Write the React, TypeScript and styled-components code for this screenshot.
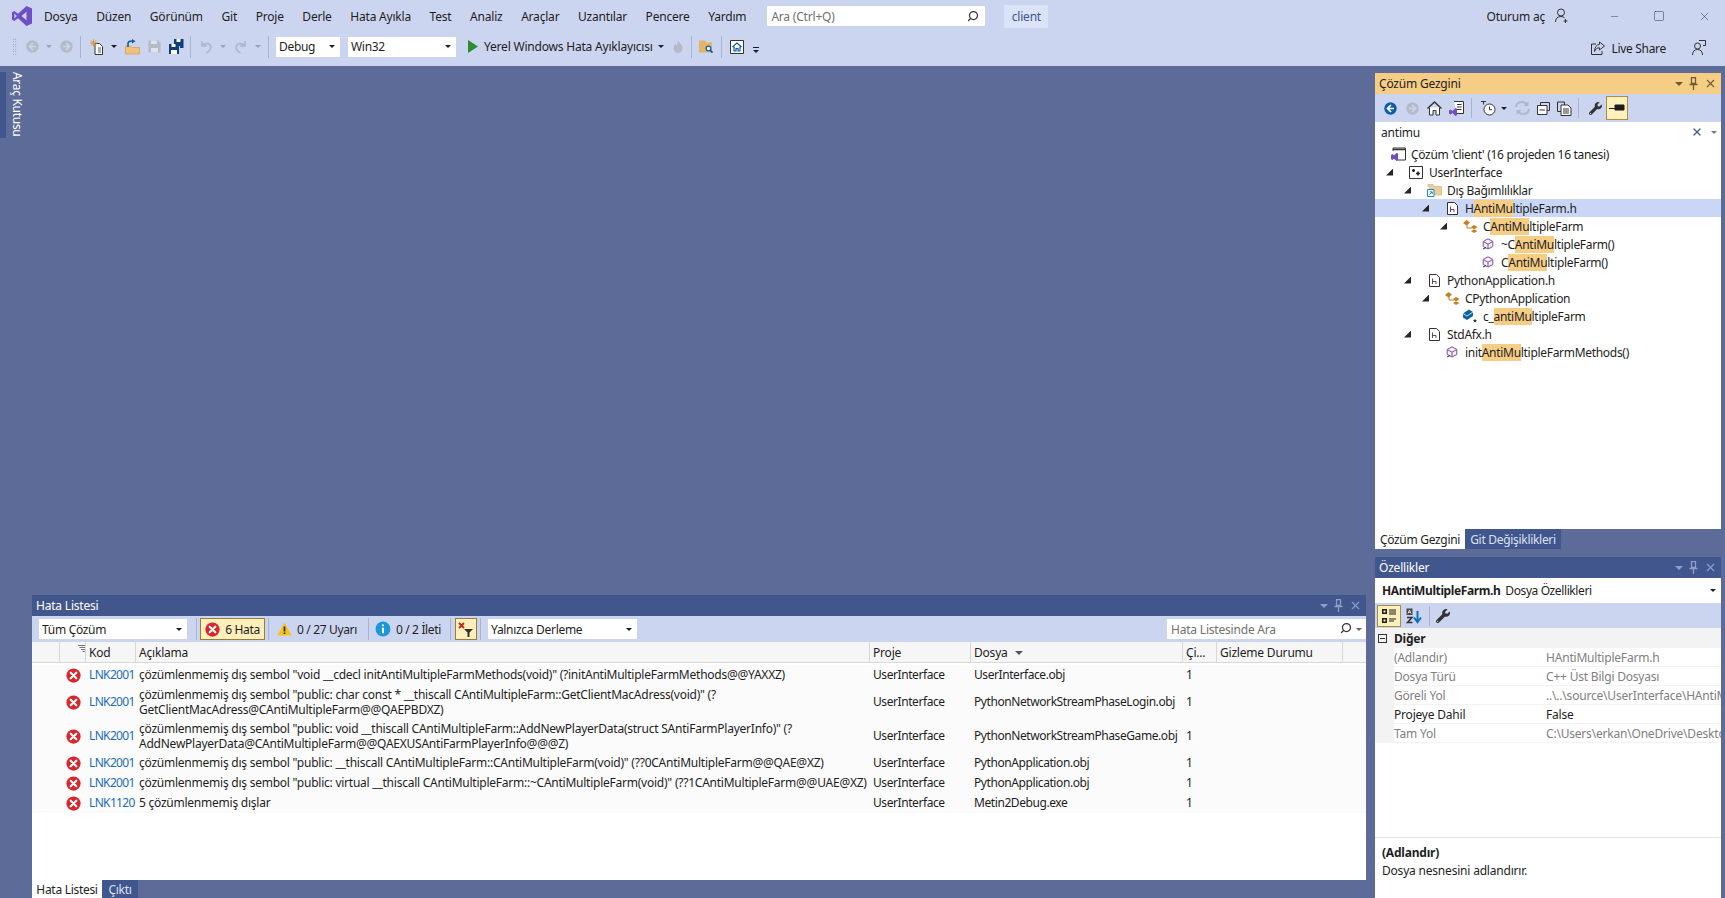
import React from 'react';
import styled, { createGlobalStyle } from 'styled-components';
import { FaWrench } from 'react-icons/fa';
import { Minus, Search, Square, X } from 'lucide-react';

const GlobalStyle = createGlobalStyle`
  html, body, #root {
    margin: 0;
    height: 100%;
  }
  body {
    overflow: hidden;
    background: #5d6b99;
    font-family: 'Noto Sans', 'Liberation Sans', sans-serif;
    font-size: 12px;
    letter-spacing: -0.2px;
    color: #1e1e1e;
  }
`;

const VsLogo = () => (
  <svg width="20" height="20" viewBox="0 0 20 20">
    <path
      fill="#6f4fc4"
      fillRule="evenodd"
      d="M14.5 0 20 2.5v15L14.5 20 6 12.2 2.4 15 0 13.8V6.2L2.4 5 6 7.8 14.5 0ZM14.5 5.8 9.6 10l4.9 4.2V5.8ZM2.4 7.6v4.8L4.8 10 2.4 7.6Z"
    />
  </svg>
);

const ErrorIcon = ({ size = 15 }: { size?: number }) => (
  <svg width={size} height={size} viewBox="0 0 16 16">
    <circle cx="8" cy="8" r="7.6" fill="#d8262c" />
    <path d="M5 5l6 6M11 5l-6 6" stroke="#fff" strokeWidth="2.3" strokeLinecap="round" />
  </svg>
);

const WarningIcon = () => (
  <svg width="15" height="14" viewBox="0 0 15 14">
    <path d="M7.5 0.5 14.8 13.5H0.2Z" fill="#f6c21c" />
    <path d="M7.5 4.5v5M7.5 10.5v1.6" stroke="#2a2a2a" strokeWidth="1.7" />
  </svg>
);

const InfoIcon = () => (
  <svg width="16" height="16" viewBox="0 0 16 16">
    <circle cx="8" cy="8" r="7.5" fill="#1c97d8" />
    <path d="M8 6.8v5.4M8 3.4v1.8" stroke="#fff" strokeWidth="2" />
  </svg>
);

const NavCircle = ({ color = '#b4bac8', inner = '#ccd5f0', flip = false }) => (
  <svg width="13" height="13" viewBox="0 0 13 13" style={flip ? { transform: 'scaleX(-1)' } : undefined}>
    <circle cx="6.5" cy="6.5" r="6.2" fill={color} />
    <path d="M7 3 3.5 6.5 7 10M4 6.5h6" stroke={inner} strokeWidth="1.7" fill="none" />
  </svg>
);

const NewFileIcon = () => (
  <svg width="14" height="16" viewBox="0 0 14 16">
    <path d="M5 4.5h4.5l3 3v8H5z" fill="#fff" stroke="#333" strokeWidth="1" />
    <path d="M8 9h3M8 11h3M8 13h3" stroke="#333" strokeWidth="0.8" />
    <path d="M3.5 0.5v7M0 4h7M1 1.5l5 5M6 1.5l-5 5" stroke="#d9982b" strokeWidth="1" />
  </svg>
);

const OpenIcon = () => (
  <svg width="15" height="16" viewBox="0 0 15 16">
    <path d="M0.5 7h5l1.5 1.5h7.5V15H0.5z" fill="#eec27a" stroke="#d29c4c" strokeWidth="0.7" />
    <path d="M3 8V4.5c0-1.7 2-2.5 4-2.5h1" fill="none" stroke="#0e5da8" strokeWidth="1.6" />
    <path d="M7 0l3.5 2.2L7 4.4z" fill="#0e5da8" />
  </svg>
);

const SaveIcon = () => (
  <svg width="13" height="13" viewBox="0 0 13 13">
    <path d="M0.5 0.5h10l2 2v10H0.5z" fill="#b4bac8" />
    <path d="M3 0.5h6v3.5H3zM3 8h7v4.5H3z" fill="#dfe3ee" />
  </svg>
);

const SaveAllIcon = () => (
  <svg width="15" height="15" viewBox="0 0 15 15">
    <path d="M5 0h9.5v9H11v-2H5z" fill="#0d3f7a" />
    <path d="M7.5 0h4v3h-4z" fill="#fff" />
    <path d="M0 5h10v10H0z" fill="#0d3f7a" />
    <path d="M2.5 5h4v3h-4zM2 11h6v4H2z" fill="#fff" />
  </svg>
);

const UndoIcon = ({ flip = false }) => (
  <svg width="12" height="14" viewBox="0 0 12 14" style={flip ? { transform: 'scaleX(-1)' } : undefined}>
    <path d="M2 1v5h5M2.5 5.5C5 2.5 10.5 3 10.8 7c.2 2.8-1.8 4.5-4.3 6" fill="none" stroke="#b0b7c8" strokeWidth="1.7" />
  </svg>
);

const PlayIcon = () => (
  <svg width="10" height="13" viewBox="0 0 10 13">
    <path d="M0 0 10 6.5 0 13z" fill="#2f8a33" />
  </svg>
);

const FlameIcon = () => (
  <svg width="10" height="13" viewBox="0 0 10 13">
    <path d="M5 0c1 3 4.5 4 4.5 8S7 13 5 13 .5 11.5.5 8c0-2 1.5-3 2-4.5L4 6z" fill="#b4bac8" />
  </svg>
);

const FolderSearchIcon = () => (
  <svg width="15" height="15" viewBox="0 0 15 15">
    <path d="M0 1.5h6l1.5 2H13v10H0z" fill="#e3b36a" />
    <circle cx="9.5" cy="9.5" r="2.3" fill="#fff" stroke="#0e5da8" strokeWidth="1.3" />
    <path d="M11 11.2l2.5 2.5" stroke="#0e5da8" strokeWidth="1.7" />
  </svg>
);

const HomeBoxIcon = () => (
  <svg width="14" height="14" viewBox="0 0 14 14">
    <path d="M0.5 0.5h13v13h-13z" fill="#fff" stroke="#333" />
    <path d="M2.5 7 7 3l4.500 4M4 6.5V11h2V8.5h2V11h2V6.500" fill="none" stroke="#0e5da8" strokeWidth="1.2" />
  </svg>
);

const PersonPlusIcon = () => (
  <svg width="14" height="16" viewBox="0 0 14 16">
    <circle cx="6" cy="4.5" r="3.5" fill="none" stroke="#333" />
    <path d="M0.5 14c0-3.500 2-5.500 5.500-5.500 1.500 0 2.500.4 3.500 1.200M10.500 11v4M8.500 13h4" fill="none" stroke="#333" />
  </svg>
);

const LiveShareIcon = () => (
  <svg width="14" height="14" viewBox="0 0 14 14">
    <path d="M5 3H0.5v10.500h10.500V10" fill="none" stroke="#333" />
    <path d="M8.5 1 13.500 5 8.5 9V6.800C6 6.800 4.500 8 3.500 10.500 3.500 6.500 5.500 3.800 8.500 3.300Z" fill="none" stroke="#333" />
  </svg>
);

const FeedbackIcon = () => (
  <svg width="14" height="16" viewBox="0 0 14 16">
    <circle cx="5.5" cy="6" r="3" fill="none" stroke="#333" />
    <path d="M0.5 15c0-3.500 2-5.500 5-5.500s5 2 5 5.500M7 0.500h6.500v5H11" fill="none" stroke="#333" />
  </svg>
);

const HomeIcon = () => (
  <svg width="15" height="15" viewBox="0 0 15 15">
    <path d="M0.5 7.5 7.5 1l7 6.5" fill="none" stroke="#333" strokeWidth="1.4" />
    <path d="M2.5 6.5V14H6V9.500h3V14h3.500V6.500" fill="#fff" stroke="#333" />
  </svg>
);

const SolutionToolIcon = () => (
  <svg width="15" height="15" viewBox="0 0 15 15">
    <path d="M5 0.5h9.500v12H8" fill="#fff" stroke="#333" />
    <path d="M8 3.5h4.500M8 6h4.500M8 8.500h4.500" stroke="#333" />
    <path d="M0 9.500 1.500 8.500l2 1.500 3-3 1.500.8v6.400l-1.500.8-3-3-2 1.500L0 12.500z" fill="#6f4fc4" />
  </svg>
);

const ClockIcon = () => (
  <svg width="15" height="15" viewBox="0 0 15 15">
    <circle cx="8.5" cy="8.5" r="5.5" fill="#fff" stroke="#333" />
    <path d="M8.5 5.500v3.200H11M0 0.500h5M2.500 0.500v3" fill="none" stroke="#333" />
  </svg>
);

const SyncIcon = () => (
  <svg width="15" height="14" viewBox="0 0 15 14">
    <path d="M1 6c.5-3 3-5 6-5 2.500 0 4 1 5 2.500M14 8c-.5 3-3 5-6 5-2.500 0-4-1-5-2.500" fill="none" stroke="#b0b7c8" strokeWidth="2" />
    <path d="M13.5 0v5h-5zM1.500 14V9h5z" fill="#b0b7c8" />
  </svg>
);

const CollapseIcon = () => (
  <svg width="13" height="13" viewBox="0 0 13 13">
    <path d="M3.5 3V0.500h9v8H10" fill="none" stroke="#333" />
    <path d="M0.5 3.500h9.500v9H0.500zM2.500 8h5.500" fill="#fff" stroke="#333" />
  </svg>
);

const PagesIcon = () => (
  <svg width="15" height="15" viewBox="0 0 15 15">
    <path d="M0.5 1h7v3M0.500 1v9.500H4" fill="none" stroke="#333" />
    <path d="M4 4h7l3 3v7.500H4z" fill="#fff" stroke="#333" />
    <path d="M6 8h6M6 10h6M6 12h6" stroke="#333" />
  </svg>
);

const PinDashIcon = () => (
  <svg width="16" height="8" viewBox="0 0 16 8">
    <path d="M0 4.5h6M6 1h9v5H6z" stroke="#1e1e1e" fill="#1e1e1e" />
  </svg>
);

const SolutionIcon = () => (
  <svg width="15" height="14" viewBox="0 0 15 14">
    <path d="M2 4V1h12.500v12H7" fill="#fff" stroke="#333" />
    <path d="M2 2.5h12" stroke="#333" strokeWidth="1.5" />
    <path d="M0 8 1.300 7l1.700 1.300L5.600 6l1.400.6v6.800l-1.400.6-2.600-2.300L1.300 13 0 12z" fill="#6f4fc4" />
  </svg>
);

const ProjectIcon = () => (
  <svg width="14" height="13" viewBox="0 0 14 13">
    <path d="M0.5 0.5h13v12h-13z" fill="#fff" stroke="#333" />
    <path d="M3 4.5h3M4.500 3v3M7 7.500h4M9 5.500v4" stroke="#222" strokeWidth="1.6" />
  </svg>
);

const DepsIcon = () => (
  <svg width="15" height="13" viewBox="0 0 15 13">
    <path d="M1 3V0.500h5l1.500 2h7V11H7" fill="#e9cf9d" stroke="#d4b277" strokeWidth="0.7" />
    <path d="M0.5 5.500h6.500v7H0.500z" fill="#fff" stroke="#1c87c9" />
    <path d="M2.5 10.500 5 8M3 7.800h2.200V10" fill="none" stroke="#1c87c9" />
  </svg>
);

const HeaderFileIcon = () => (
  <svg width="11" height="13" viewBox="0 0 11 13">
    <path d="M0.5 0.5h7l3 3v9h-10z" fill="#fff" stroke="#333" />
    <path d="M3.5 4.500v5.500M3.500 7.500h3.500V10" fill="none" stroke="#6a3f7d" />
  </svg>
);

const ClassIcon = () => (
  <svg width="15" height="13" viewBox="0 0 15 13">
    <path d="M3.5 0 7 2.500 3.500 5.500 0 3zM11 5l3.500 2L11 9.500 8 7zM11 9.500l3.500 1.500L11 13 8 11z" fill="#c67f1e" />
    <path d="M4 4v4h5" fill="none" stroke="#c67f1e" />
  </svg>
);

const MethodIcon = () => (
  <svg width="12" height="13" viewBox="0 0 12 13">
    <path d="M6 0.8 10.800 3.500v5L6 11 1.200 8.500v-5z" fill="#f6f0fa" stroke="#7a4f99" />
    <path d="M1.5 3.700 6 6.200l4.500-2.500M6 6.200v4.500" fill="none" stroke="#7a4f99" />
    <path d="M1 11 4 9.500" stroke="#333" />
  </svg>
);

const FieldIcon = () => (
  <svg width="15" height="14" viewBox="0 0 15 14">
    <path d="M0 4.5 6 0.500l4 2.500v4L4 11 0 8.500z" fill="#0e639c" />
    <path d="M0 4.5 4 7l6-4" fill="none" stroke="#fff" strokeWidth="0.8" />
    <path d="M12 9.500l.6 1.400 1.400.2-1 1 .3 1.400-1.300-.7-1.300.7.300-1.400-1-1 1.400-.2z" fill="#333" />
  </svg>
);

const CategorizedIcon = () => (
  <svg width="16" height="16" viewBox="0 0 16 16">
    <path d="M1 1h5v5H1zM1 10h5v5H1z" fill="#1e1e1e" />
    <path d="M2.5 2.500h2v2h-2zM2.500 11.500h2v2h-2z" fill="#ffefbb" />
    <path d="M8 2h7M8 4h7M8 6h7M8 11h7M8 13h5" stroke="#1e1e1e" />
  </svg>
);

const SortAzIcon = () => (
  <svg width="16" height="16" viewBox="0 0 16 16">
    <path d="M0.5 0.500h6v6.500h-6z" fill="#444" />
    <path d="M2 5.500 3.500 2 5 5.500M2.500 4.300h2" stroke="#fff" fill="none" strokeWidth="0.8" />
    <path d="M1 9.500h5L1.500 14.500h5" fill="none" stroke="#333" strokeWidth="1.5" />
    <path d="M11.5 3v10" stroke="#0e70c0" strokeWidth="2" />
    <path d="M8 9.500l3.500 4.500L15 9.500" fill="none" stroke="#0e70c0" strokeWidth="2" />
  </svg>
);

const FilterIcon = () => (
  <svg width="16" height="16" viewBox="0 0 16 16">
    <path d="M1 2l5 5M6 2l-5 5" stroke="#c2261e" strokeWidth="1.8" />
    <path d="M6 8h9l-3.500 3.500V16h-2v-4.500z" fill="#333" />
  </svg>
);

const SortHintIcon = () => (
  <svg width="7" height="7" viewBox="0 0 7 7">
    <path d="M0 0.5h7M1.500 2.500h5.500M3 4.500h4M4.500 6.500h2.500" stroke="#777" />
  </svg>
);

const PinIcon = ({ color }: { color: string }) => (
  <svg width="9" height="13" viewBox="0 0 9 13">
    <path d="M2 0.5h5M2.500 0.500v6h4v-6M0.500 7.500h8M4.500 7.500V13" fill="none" stroke={color} strokeWidth="1.3" />
  </svg>
);

const Page = styled.div`
  display: flex;
  flex-direction: column;
  height: 898px;
  width: 1725px;
  overflow: hidden;
`;

const Chrome = styled.header`
  flex: none;
  height: 66px;
  background: #ccd5f0;
`;

const MenuRow = styled.div`
  display: flex;
  align-items: center;
  height: 32px;
  padding-left: 12px;
`;

const MenuList = styled.nav`
  display: flex;
  align-items: center;
  margin-left: 12px;
  gap: 18.6px;
`;

const MenuItem = styled.span`
  white-space: nowrap;
`;

const QuickSearch = styled.div`
  display: flex;
  align-items: center;
  justify-content: space-between;
  box-sizing: border-box;
  width: 218px;
  height: 20px;
  margin-left: 21px;
  padding: 0 6px 0 4px;
  background: #fff;
  color: #717171;
`;

const SolutionBadge = styled.div`
  display: flex;
  align-items: center;
  justify-content: center;
  width: 44px;
  height: 23px;
  margin-left: 19px;
  background: #dbe3f8;
  color: #40568d;
`;

const AccountArea = styled.div`
  display: flex;
  align-items: center;
  margin-left: auto;
  padding-right: 14px;
`;

const WindowButton = styled.span<{ $ml: number }>`
  display: flex;
  margin-left: ${({ $ml }) => $ml}px;
  color: #333;
`;

const ToolRow = styled.div`
  display: flex;
  align-items: center;
  height: 29px;
  padding-left: 12px;
`;

const Slot = styled.span<{ $w: number; $ml: number }>`
  display: flex;
  align-items: center;
  justify-content: center;
  flex: none;
  width: ${({ $w }) => $w}px;
  margin-left: ${({ $ml }) => $ml}px;
`;

const Grip = styled.span`
  flex: none;
  width: 5px;
  height: 18px;
  background-image: radial-gradient(#7d86a3 0.7px, transparent 0.8px);
  background-size: 2.5px 2.5px;
`;

const Caret = styled.span<{ $color?: string }>`
  display: inline-block;
  width: 0;
  height: 0;
  border-left: 3px solid transparent;
  border-right: 3px solid transparent;
  border-top: 3px solid ${({ $color }) => $color || '#1e1e1e'};
`;

const ToolSep = styled.span<{ $ml: number; $h?: number }>`
  flex: none;
  width: 1px;
  height: ${({ $h }) => $h || 22}px;
  margin-left: ${({ $ml }) => $ml}px;
  background: #a9b3cf;
`;

const Combo = styled.div<{ $w: number; $ml: number }>`
  display: flex;
  align-items: center;
  justify-content: space-between;
  flex: none;
  box-sizing: border-box;
  width: ${({ $w }) => $w}px;
  height: 20px;
  margin-left: ${({ $ml }) => $ml}px;
  padding: 0 5px 0 3px;
  background: #fff;
  white-space: nowrap;
  letter-spacing: -0.3px;
`;

const RunLabel = styled.span`
  flex: none;
  width: 167px;
  margin-left: 6px;
  white-space: nowrap;
`;

const OverflowMark = styled.span`
  flex: none;
  width: 6px;
  height: 6px;
  margin-left: 9px;
  margin-top: 8px;
  border-top: 1px solid #1e1e1e;
  &::after {
    content: '';
    display: block;
    width: 0;
    margin-top: 2px;
    border-left: 3px solid transparent;
    border-right: 3px solid transparent;
    border-top: 3px solid #1e1e1e;
  }
`;

const ShareArea = styled.div`
  display: flex;
  align-items: center;
  margin-left: auto;
  margin-top: 3px;
  padding-right: 19px;
`;

const ShareLabel = styled.span`
  margin: 0 26px 0 6px;
  letter-spacing: -0.3px;
`;

const Body = styled.main`
  flex: 1;
  display: flex;
  min-height: 0;
`;

const LeftDock = styled.aside`
  flex: none;
  width: 32px;
  padding-top: 6px;
`;

const ToolboxTab = styled.div`
  height: 66px;
  padding-left: 5px;
  border-left: 6px solid #40568d;
  box-sizing: border-box;
  writing-mode: vertical-rl;
  color: #fff;
  line-height: 12px;
  letter-spacing: -0.3px;
`;

const Center = styled.section`
  flex: none;
  display: flex;
  flex-direction: column;
  justify-content: flex-end;
  width: 1334px;
`;

const ErrorPanel = styled.div`
  display: flex;
  flex-direction: column;
  height: 303px;
`;

const TitleBar = styled.div<{ $active?: boolean }>`
  display: flex;
  align-items: center;
  flex: none;
  height: 21px;
  padding: 0 4px;
  background: ${({ $active }) => ($active ? '#f6cd85' : '#40568d')};
  color: ${({ $active }) => ($active ? '#1e1e1e' : '#fff')};
`;

const TitleText = styled.span`
  flex: 1;
`;

const TitleActions = styled.span`
  display: flex;
  align-items: center;
  gap: 6px;
`;

const ErrorToolbar = styled.div`
  display: flex;
  align-items: center;
  flex: none;
  height: 26px;
  background: #ccd5f0;
`;

const FilterButton = styled.div<{ $w: number; $ml: number; $on?: boolean }>`
  display: flex;
  align-items: center;
  justify-content: center;
  flex: none;
  gap: 5px;
  box-sizing: border-box;
  width: ${({ $w }) => $w}px;
  height: 22px;
  margin-left: ${({ $ml }) => $ml}px;
  white-space: nowrap;
  letter-spacing: -0.35px;
  ${({ $on }) => $on && 'background: #ffefbb; border: 1px solid #9a7b3a;'}
`;

const ListSearch = styled.div`
  display: flex;
  align-items: center;
  justify-content: space-between;
  box-sizing: border-box;
  width: 199px;
  height: 20px;
  margin-left: auto;
  padding: 0 4px;
  background: #fff;
  color: #717171;
`;

const ErrorBody = styled.div`
  flex: 1;
  background: #fff;
  min-height: 0;
`;

const COLUMNS = '27px 26px 50px 734px 101px 212px 34px 126px 24px';

const HeaderRow = styled.div`
  display: grid;
  grid-template-columns: ${COLUMNS};
  height: 21px;
  box-sizing: border-box;
  margin-bottom: 2px;
  background: #f6f6f6;
  border-bottom: 1px solid #d8d8d8;
`;

const HeaderCell = styled.div<{ $first?: boolean }>`
  display: flex;
  align-items: center;
  padding: 1px 0 0 3px;
  overflow: hidden;
  white-space: nowrap;
  ${({ $first }) => !$first && 'border-left: 1px solid #d8d8d8;'}
`;

const SortHint = styled.span`
  margin: 0 0 8px 15px;
  display: flex;
`;

const SortCaret = styled(Caret)`
  margin-left: 7px;
  border-left-width: 4px;
  border-right-width: 4px;
  border-top-width: 4px;
  border-top-color: #555;
`;

const ErrorRow = styled.div<{ $double?: boolean }>`
  display: grid;
  grid-template-columns: ${COLUMNS};
  align-items: center;
  height: ${({ $double }) => ($double ? 34 : 20)}px;
  line-height: 15.5px;
  background: #fbfbfc;
`;

const StatusCell = styled.div`
  grid-column: 2;
  display: flex;
  justify-content: center;
  padding-left: 2px;
`;

const CodeCell = styled.div`
  padding-left: 4px;
  color: #1b6cb5;
  letter-spacing: -0.65px;
`;

const DescCell = styled.div`
  padding-left: 4px;
  white-space: nowrap;
  letter-spacing: -0.24px;
`;

const PlainCell = styled.div`
  padding-left: 4px;
  white-space: nowrap;
  letter-spacing: -0.42px;
`;

const TabStrip = styled.div<{ $h: number }>`
  display: flex;
  flex: none;
  height: ${({ $h }) => $h}px;
`;

const Tab = styled.div<{ $active?: boolean; $w: number }>`
  display: flex;
  align-items: center;
  justify-content: center;
  width: ${({ $w }) => $w}px;
  letter-spacing: -0.3px;
  background: ${({ $active }) => ($active ? '#fff' : '#40568d')};
  color: ${({ $active }) => ($active ? '#1e1e1e' : '#dbe1f3')};
`;

const RightDock = styled.aside`
  flex: none;
  display: flex;
  flex-direction: column;
  width: 346px;
  margin-left: 9px;
  padding-top: 7px;
  gap: 8px;
`;

const ExplorerPanel = styled.div`
  display: flex;
  flex-direction: column;
  height: 476px;
`;

const PanelToolbar = styled.div<{ $h: number }>`
  display: flex;
  align-items: center;
  flex: none;
  height: ${({ $h }) => $h}px;
  background: #ccd5f0;
`;

const ActiveTool = styled.span<{ $w: number; $h: number; $ml: number }>`
  display: flex;
  align-items: center;
  justify-content: center;
  flex: none;
  box-sizing: border-box;
  width: ${({ $w }) => $w}px;
  height: ${({ $h }) => $h}px;
  margin-left: ${({ $ml }) => $ml}px;
  background: #ffefbb;
  border: 1px solid #a98c45;
`;

const TreeSearch = styled.div`
  display: flex;
  align-items: center;
  flex: none;
  height: 20px;
  padding: 0 4px 0 6px;
  background: #fff;
`;

const TreeSearchText = styled.span`
  flex: 1;
`;

const Tree = styled.div`
  flex: 1;
  padding-top: 3px;
  background: #fff;
  letter-spacing: -0.3px;
`;

const TreeRow = styled.div<{ $depth: number; $selected?: boolean }>`
  display: flex;
  align-items: center;
  height: 18px;
  padding-left: ${({ $depth }) => 15 + $depth * 18}px;
  background: ${({ $selected }) => ($selected ? '#c9d6f5' : 'transparent')};
  white-space: nowrap;
`;

const TreeArrow = styled.span`
  flex: none;
  width: 7px;
  height: 7px;
  margin: 0 15px 0 -22px;
  background: #262626;
  clip-path: polygon(100% 0, 100% 100%, 0 100%);
`;

const TreeIconBox = styled.span`
  display: flex;
  align-items: center;
  justify-content: center;
  flex: none;
  width: 16px;
  margin-right: 5px;
`;

const Mark = styled.span`
  background: #f6cd85;
`;

const PropsPanel = styled.div`
  flex: 1;
  display: flex;
  flex-direction: column;
  min-height: 0;
  background: #fff;
`;

const PropsHeader = styled.div`
  display: flex;
  align-items: center;
  flex: none;
  height: 25px;
  padding: 0 5px 0 7px;
  background: #fff;
  letter-spacing: -0.4px;
`;

const PropsName = styled.b`
  margin-right: 5px;
`;

const PropsKind = styled.span`
  flex: 1;
`;

const PropsGrid = styled.div`
  flex: 1;
`;

const GroupRow = styled.div`
  display: flex;
  align-items: center;
  height: 20px;
  background: #f3f3f3;
  font-weight: 700;
`;

const GroupToggle = styled.span`
  display: flex;
  align-items: center;
  justify-content: center;
  flex: none;
  box-sizing: border-box;
  width: 9px;
  height: 9px;
  margin: 0 7px 0 3px;
  border: 1px solid #333;
  &::after {
    content: '';
    width: 5px;
    height: 1px;
    background: #333;
  }
`;

const PropRow = styled.div`
  display: grid;
  grid-template-columns: 19px 148px 1fr;
  height: 19px;
  box-sizing: border-box;
  align-items: center;
  border-bottom: 1px solid #f2f2f2;
`;

const PropGutter = styled.span`
  align-self: stretch;
  background: #f3f3f3;
`;

const PropCell = styled.span<{ $editable?: boolean; $value?: boolean }>`
  padding-left: ${({ $value }) => ($value ? 4 : 0)}px;
  color: ${({ $editable }) => ($editable ? '#1e1e1e' : '#808080')};
  white-space: nowrap;
  overflow: hidden;
`;

const PropsHelp = styled.div`
  flex: none;
  height: 61px;
  box-sizing: border-box;
  padding: 6px 7px;
  border-top: 1px solid #e3e3e3;
  line-height: 18px;
`;

const ERRORS = [
  {
    code: 'LNK2001',
    lines: ['çözümlenmemiş dış sembol "void __cdecl initAntiMultipleFarmMethods(void)" (?initAntiMultipleFarmMethods@@YAXXZ)'],
    file: 'UserInterface.obj',
  },
  {
    code: 'LNK2001',
    lines: [
      'çözümlenmemiş dış sembol "public: char const * __thiscall CAntiMultipleFarm::GetClientMacAdress(void)" (?',
      'GetClientMacAdress@CAntiMultipleFarm@@QAEPBDXZ)',
    ],
    file: 'PythonNetworkStreamPhaseLogin.obj',
  },
  {
    code: 'LNK2001',
    lines: [
      'çözümlenmemiş dış sembol "public: void __thiscall CAntiMultipleFarm::AddNewPlayerData(struct SAntiFarmPlayerInfo)" (?',
      'AddNewPlayerData@CAntiMultipleFarm@@QAEXUSAntiFarmPlayerInfo@@@Z)',
    ],
    file: 'PythonNetworkStreamPhaseGame.obj',
  },
  {
    code: 'LNK2001',
    lines: ['çözümlenmemiş dış sembol "public: __thiscall CAntiMultipleFarm::CAntiMultipleFarm(void)" (??0CAntiMultipleFarm@@QAE@XZ)'],
    file: 'PythonApplication.obj',
  },
  {
    code: 'LNK2001',
    lines: ['çözümlenmemiş dış sembol "public: virtual __thiscall CAntiMultipleFarm::~CAntiMultipleFarm(void)" (??1CAntiMultipleFarm@@UAE@XZ)'],
    file: 'PythonApplication.obj',
  },
  { code: 'LNK1120', lines: ['5 çözümlenmemiş dışlar'], file: 'Metin2Debug.exe' },
];

const TREE = [
  { depth: 0, icon: <SolutionIcon />, label: "Çözüm 'client' (16 projeden 16 tanesi)", leaf: true },
  { depth: 1, icon: <ProjectIcon />, label: 'UserInterface' },
  { depth: 2, icon: <DepsIcon />, label: 'Dış Bağımlılıklar' },
  { depth: 3, icon: <HeaderFileIcon />, label: 'HAntiMultipleFarm.h', selected: true },
  { depth: 4, icon: <ClassIcon />, label: 'CAntiMultipleFarm' },
  { depth: 5, icon: <MethodIcon />, label: '~CAntiMultipleFarm()', leaf: true },
  { depth: 5, icon: <MethodIcon />, label: 'CAntiMultipleFarm()', leaf: true },
  { depth: 2, icon: <HeaderFileIcon />, label: 'PythonApplication.h' },
  { depth: 3, icon: <ClassIcon />, label: 'CPythonApplication' },
  { depth: 4, icon: <FieldIcon />, label: 'c_antiMultipleFarm', leaf: true },
  { depth: 2, icon: <HeaderFileIcon />, label: 'StdAfx.h' },
  { depth: 3, icon: <MethodIcon />, label: 'initAntiMultipleFarmMethods()', leaf: true },
];

const PROPS = [
  { name: '(Adlandır)', value: 'HAntiMultipleFarm.h' },
  { name: 'Dosya Türü', value: 'C++ Üst Bilgi Dosyası' },
  { name: 'Göreli Yol', value: '..\\..\\source\\UserInterface\\HAntiMultipleFarm.h' },
  { name: 'Projeye Dahil', value: 'False', editable: true },
  { name: 'Tam Yol', value: 'C:\\Users\\erkan\\OneDrive\\Desktop\\source' },
];

const highlight = (text: string) => {
  const at = text.toLowerCase().indexOf('antimu');
  if (at < 0) return text;
  return (
    <>
      {text.slice(0, at)}
      <Mark>{text.slice(at, at + 6)}</Mark>
      {text.slice(at + 6)}
    </>
  );
};

const PanelActions = ({ color }: { color: string }) => (
  <TitleActions>
    <Caret $color={color} style={{ borderLeftWidth: 4, borderRightWidth: 4, borderTopWidth: 4 }} />
    <PinIcon color={color} />
    <X size={13} color={color} strokeWidth={2} />
  </TitleActions>
);

const MainMenu = () => (
  <MenuRow>
    <VsLogo />
    <MenuList>
      {['Dosya', 'Düzen', 'Görünüm', 'Git', 'Proje', 'Derle', 'Hata Ayıkla', 'Test', 'Analiz', 'Araçlar', 'Uzantılar', 'Pencere', 'Yardım'].map((item) => (
        <MenuItem key={item}>{item}</MenuItem>
      ))}
    </MenuList>
    <QuickSearch>
      Ara (Ctrl+Q)
      <Search size={12} color="#333" strokeWidth={2.5} style={{ transform: 'scaleX(-1)' }} />
    </QuickSearch>
    <SolutionBadge>client</SolutionBadge>
    <AccountArea>
      Oturum aç
      <WindowButton $ml={10}>
        <PersonPlusIcon />
      </WindowButton>
      <WindowButton $ml={40}>
        <Minus size={11} strokeWidth={1} />
      </WindowButton>
      <WindowButton $ml={33}>
        <Square size={12} strokeWidth={1} />
      </WindowButton>
      <WindowButton $ml={33}>
        <X size={13} strokeWidth={1} />
      </WindowButton>
    </AccountArea>
  </MenuRow>
);

const MainToolbar = () => (
  <ToolRow>
    <Grip />
    <Slot $w={13} $ml={9}><NavCircle /></Slot>
    <Slot $w={6} $ml={7}><Caret $color="#9aa2b8" /></Slot>
    <Slot $w={13} $ml={8}><NavCircle flip /></Slot>
    <ToolSep $ml={7} />
    <Slot $w={14} $ml={9}><NewFileIcon /></Slot>
    <Slot $w={6} $ml={7}><Caret /></Slot>
    <Slot $w={15} $ml={8}><OpenIcon /></Slot>
    <Slot $w={13} $ml={8}><SaveIcon /></Slot>
    <Slot $w={15} $ml={8}><SaveAllIcon /></Slot>
    <ToolSep $ml={6} />
    <Slot $w={12} $ml={9}><UndoIcon /></Slot>
    <Slot $w={6} $ml={8}><Caret $color="#9aa2b8" /></Slot>
    <Slot $w={12} $ml={9}><UndoIcon flip /></Slot>
    <Slot $w={6} $ml={8}><Caret $color="#9aa2b8" /></Slot>
    <ToolSep $ml={7} />
    <Combo $w={64} $ml={7}>Debug<Caret /></Combo>
    <Combo $w={108} $ml={8}>Win32<Caret /></Combo>
    <Slot $w={10} $ml={12}><PlayIcon /></Slot>
    <RunLabel>Yerel Windows Hata Ayıklayıcısı</RunLabel>
    <Slot $w={6} $ml={7}><Caret /></Slot>
    <Slot $w={10} $ml={9}><FlameIcon /></Slot>
    <ToolSep $ml={8} />
    <Slot $w={15} $ml={7}><FolderSearchIcon /></Slot>
    <ToolSep $ml={7} />
    <Slot $w={14} $ml={8}><HomeBoxIcon /></Slot>
    <OverflowMark />
    <ShareArea>
      <LiveShareIcon />
      <ShareLabel>Live Share</ShareLabel>
      <FeedbackIcon />
    </ShareArea>
  </ToolRow>
);

const ErrorList = () => (
  <ErrorPanel>
    <TitleBar>
      <TitleText>Hata Listesi</TitleText>
      <PanelActions color="#8f9fc8" />
    </TitleBar>
    <ErrorToolbar>
      <Combo $w={148} $ml={7}>Tüm Çözüm<Caret /></Combo>
      <ToolSep $ml={9} />
      <FilterButton $w={65} $ml={3} $on><ErrorIcon />6 Hata</FilterButton>
      <ToolSep $ml={3} />
      <FilterButton $w={84} $ml={6}><WarningIcon />0 / 27 Uyarı</FilterButton>
      <ToolSep $ml={9} />
      <FilterButton $w={66} $ml={6}><InfoIcon />0 / 2 İleti</FilterButton>
      <ToolSep $ml={9} />
      <FilterButton $w={22} $ml={4} $on><FilterIcon /></FilterButton>
      <ToolSep $ml={3} />
      <Combo $w={149} $ml={7}>Yalnızca Derleme<Caret /></Combo>
      <ListSearch>
        Hata Listesinde Ara
        <span>
          <Search size={12} color="#333" strokeWidth={2.5} style={{ transform: 'scaleX(-1)' }} />
          <Caret $color="#666" style={{ marginLeft: 4, marginBottom: 3 }} />
        </span>
      </ListSearch>
    </ErrorToolbar>
    <ErrorBody>
      <HeaderRow>
        <HeaderCell $first />
        <HeaderCell><SortHint><SortHintIcon /></SortHint></HeaderCell>
        <HeaderCell>Kod</HeaderCell>
        <HeaderCell>Açıklama</HeaderCell>
        <HeaderCell>Proje</HeaderCell>
        <HeaderCell>Dosya<SortCaret /></HeaderCell>
        <HeaderCell>Çi...</HeaderCell>
        <HeaderCell>Gizleme Durumu</HeaderCell>
        <HeaderCell />
      </HeaderRow>
      {ERRORS.map((error) => (
        <ErrorRow key={error.lines[0]} $double={error.lines.length > 1}>
          <StatusCell><ErrorIcon /></StatusCell>
          <CodeCell>{error.code}</CodeCell>
          <DescCell>
            {error.lines.map((line) => (
              <div key={line}>{line}</div>
            ))}
          </DescCell>
          <PlainCell>UserInterface</PlainCell>
          <PlainCell>{error.file}</PlainCell>
          <PlainCell>1</PlainCell>
        </ErrorRow>
      ))}
    </ErrorBody>
    <TabStrip $h={18}>
      <Tab $active $w={70}>Hata Listesi</Tab>
      <Tab $w={36}>Çıktı</Tab>
    </TabStrip>
  </ErrorPanel>
);

const SolutionExplorer = () => (
  <ExplorerPanel>
    <TitleBar $active>
      <TitleText>Çözüm Gezgini</TitleText>
      <PanelActions color="#6e5a2e" />
    </TitleBar>
    <PanelToolbar $h={28}>
      <Slot $w={13} $ml={9}><NavCircle color="#0e5da8" inner="#fff" /></Slot>
      <Slot $w={13} $ml={9}><NavCircle flip /></Slot>
      <Slot $w={15} $ml={8}><HomeIcon /></Slot>
      <Slot $w={15} $ml={7}><SolutionToolIcon /></Slot>
      <ToolSep $ml={7} $h={20} />
      <Slot $w={15} $ml={9}><ClockIcon /></Slot>
      <Slot $w={6} $ml={5}><Caret /></Slot>
      <Slot $w={15} $ml={8}><SyncIcon /></Slot>
      <Slot $w={13} $ml={7}><CollapseIcon /></Slot>
      <Slot $w={15} $ml={7}><PagesIcon /></Slot>
      <ToolSep $ml={6} $h={20} />
      <Slot $w={14} $ml={9}><FaWrench size={13} color="#333" /></Slot>
      <ActiveTool $w={22} $h={24} $ml={4}><PinDashIcon /></ActiveTool>
    </PanelToolbar>
    <TreeSearch>
      <TreeSearchText>antimu</TreeSearchText>
      <X size={12} color="#40568d" strokeWidth={2.5} />
      <Caret $color="#777" style={{ marginLeft: 8 }} />
    </TreeSearch>
    <Tree>
      {TREE.map((node) => (
        <TreeRow key={node.label} $depth={node.depth} $selected={node.selected}>
          {!node.leaf && <TreeArrow />}
          <TreeIconBox>{node.icon}</TreeIconBox>
          <span>{highlight(node.label)}</span>
        </TreeRow>
      ))}
    </Tree>
    <TabStrip $h={20}>
      <Tab $active $w={90}>Çözüm Gezgini</Tab>
      <Tab $w={96}>Git Değişiklikleri</Tab>
    </TabStrip>
  </ExplorerPanel>
);

const Properties = () => (
  <PropsPanel>
    <TitleBar>
      <TitleText>Özellikler</TitleText>
      <PanelActions color="#8f9fc8" />
    </TitleBar>
    <PropsHeader>
      <PropsName>HAntiMultipleFarm.h</PropsName>
      <PropsKind>Dosya Özellikleri</PropsKind>
      <Caret />
    </PropsHeader>
    <PanelToolbar $h={25}>
      <ActiveTool $w={24} $h={22} $ml={2}><CategorizedIcon /></ActiveTool>
      <Slot $w={16} $ml={5}><SortAzIcon /></Slot>
      <ToolSep $ml={7} $h={20} />
      <Slot $w={14} $ml={6}><FaWrench size={14} color="#333" /></Slot>
    </PanelToolbar>
    <PropsGrid>
      <GroupRow>
        <GroupToggle />
        Diğer
      </GroupRow>
      {PROPS.map((prop) => (
        <PropRow key={prop.name}>
          <PropGutter />
          <PropCell $editable={prop.editable}>{prop.name}</PropCell>
          <PropCell $editable={prop.editable} $value>{prop.value}</PropCell>
        </PropRow>
      ))}
    </PropsGrid>
    <PropsHelp>
      <b>(Adlandır)</b>
      <div>Dosya nesnesini adlandırır.</div>
    </PropsHelp>
  </PropsPanel>
);

const App = () => (
  <Page>
    <GlobalStyle />
    <Chrome>
      <MainMenu />
      <MainToolbar />
    </Chrome>
    <Body>
      <LeftDock>
        <ToolboxTab>Araç Kutusu</ToolboxTab>
      </LeftDock>
      <Center>
        <ErrorList />
      </Center>
      <RightDock>
        <SolutionExplorer />
        <Properties />
      </RightDock>
    </Body>
  </Page>
);

export default App;
